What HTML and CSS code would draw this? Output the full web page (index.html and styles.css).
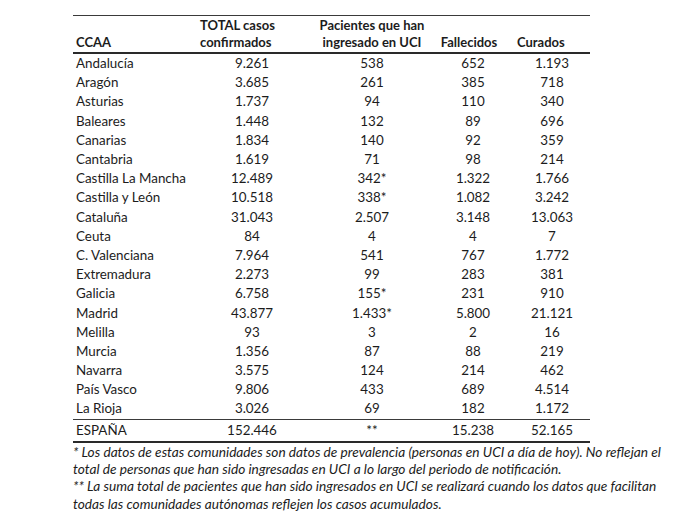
FILE: index.html
```html
<!DOCTYPE html>
<html lang="es">
<head>
<meta charset="utf-8">
<title>Casos por CCAA</title>
<link rel="stylesheet" href="styles.css">
</head>
<body>
<div class="page">
  <table class="data">
    <colgroup>
      <col class="c1"><col class="c2"><col class="c3"><col class="c4"><col class="c5">
    </colgroup>
    <thead>
      <tr>
        <th class="h1">CCAA</th>
        <th class="h2">TOTAL casos<br>confirmados</th>
        <th class="h3">Pacientes que han<br>ingresado en UCI</th>
        <th class="h4">Fallecidos</th>
        <th class="h5">Curados</th>
      </tr>
    </thead>
    <tbody>
      <tr><td>Andalucía</td><td class="n2">9.261</td><td class="n3">538</td><td class="n4">652</td><td class="n5">1.193</td></tr>
      <tr><td>Aragón</td><td class="n2">3.685</td><td class="n3">261</td><td class="n4">385</td><td class="n5">718</td></tr>
      <tr><td>Asturias</td><td class="n2">1.737</td><td class="n3">94</td><td class="n4">110</td><td class="n5">340</td></tr>
      <tr><td>Baleares</td><td class="n2">1.448</td><td class="n3">132</td><td class="n4">89</td><td class="n5">696</td></tr>
      <tr><td>Canarias</td><td class="n2">1.834</td><td class="n3">140</td><td class="n4">92</td><td class="n5">359</td></tr>
      <tr><td>Cantabria</td><td class="n2">1.619</td><td class="n3">71</td><td class="n4">98</td><td class="n5">214</td></tr>
      <tr><td>Castilla La Mancha</td><td class="n2">12.489</td><td class="n3">342*</td><td class="n4">1.322</td><td class="n5">1.766</td></tr>
      <tr><td>Castilla y León</td><td class="n2">10.518</td><td class="n3">338*</td><td class="n4">1.082</td><td class="n5">3.242</td></tr>
      <tr><td>Cataluña</td><td class="n2">31.043</td><td class="n3">2.507</td><td class="n4">3.148</td><td class="n5">13.063</td></tr>
      <tr><td>Ceuta</td><td class="n2">84</td><td class="n3">4</td><td class="n4">4</td><td class="n5">7</td></tr>
      <tr><td>C. Valenciana</td><td class="n2">7.964</td><td class="n3">541</td><td class="n4">767</td><td class="n5">1.772</td></tr>
      <tr><td>Extremadura</td><td class="n2">2.273</td><td class="n3">99</td><td class="n4">283</td><td class="n5">381</td></tr>
      <tr><td>Galicia</td><td class="n2">6.758</td><td class="n3">155*</td><td class="n4">231</td><td class="n5">910</td></tr>
      <tr><td>Madrid</td><td class="n2">43.877</td><td class="n3">1.433*</td><td class="n4">5.800</td><td class="n5">21.121</td></tr>
      <tr><td>Melilla</td><td class="n2">93</td><td class="n3">3</td><td class="n4">2</td><td class="n5">16</td></tr>
      <tr><td>Murcia</td><td class="n2">1.356</td><td class="n3">87</td><td class="n4">88</td><td class="n5">219</td></tr>
      <tr><td>Navarra</td><td class="n2">3.575</td><td class="n3">124</td><td class="n4">214</td><td class="n5">462</td></tr>
      <tr><td>País Vasco</td><td class="n2">9.806</td><td class="n3">433</td><td class="n4">689</td><td class="n5">4.514</td></tr>
      <tr class="last"><td>La Rioja</td><td class="n2">3.026</td><td class="n3">69</td><td class="n4">182</td><td class="n5">1.172</td></tr>
    </tbody>
    <tfoot>
      <tr><td>ESPAÑA</td><td class="n2">152.446</td><td class="n3">**</td><td class="n4">15.238</td><td class="n5">52.165</td></tr>
    </tfoot>
  </table>
  <div class="notes">
    <p>* Los datos de estas comunidades son datos de prevalencia (personas en UCI a día de hoy). No reflejan el<br>total de personas que han sido ingresadas en UCI a lo largo del periodo de notificación.</p>
    <p>** La suma total de pacientes que han sido ingresados en UCI se realizará cuando los datos que facilitan<br>todas las comunidades autónomas reflejen los casos acumulados.</p>
  </div>
</div>
</body>
</html>
```

FILE: styles.css
```css
html, body {
  margin: 0;
  padding: 0;
  background: #ffffff;
}
body {
  font-family: Lato, "Open Sans", "Liberation Sans", sans-serif;
  color: #1c1c1c;
}
.page {
  padding: 15px 0 0 73px;
}
.data {
  border-collapse: collapse;
  table-layout: fixed;
  width: 517px;
  font-size: 13.4px;
  border-top: 1px solid #3a3a3a;
}
.c1 { width: 123px; }
.c2 { width: 112px; }
.c3 { width: 128px; }
.c4 { width: 74px; }
.c5 { width: 80px; }
th {
  font-weight: 700;
  font-size: 13px;
  line-height: 17px;
  vertical-align: bottom;
  padding: 1px 0 1px 0;
  white-space: nowrap;
  border-bottom: 2px solid #2a2a2a;
}
.h1 { text-align: left; padding-left: 3px; }
.h2 { text-align: left; padding-left: 4px; }
.h3 { text-align: center; }
.h4 { text-align: center; padding-right: 8px; }
.h5 { text-align: left; padding-left: 7px; }
td {
  padding: 0;
  height: 19.2px;
  line-height: 19px;
  white-space: nowrap;
}
td:first-child { padding-left: 3px; }
.n2, .n3, .n4, .n5 { text-align: center; }
.n5 { padding-left: 4px; }
tbody tr.last td { border-bottom: 1px solid #3a3a3a; }
tfoot td {
  height: 21px;
  border-bottom: 2px solid #2a2a2a;
}
.notes {
  margin-top: 0;
  font-size: 13.7px;
  font-style: italic;
  line-height: 17.4px;
  color: #1c1c1c;
}
.notes p {
  margin: 0;
}
```
